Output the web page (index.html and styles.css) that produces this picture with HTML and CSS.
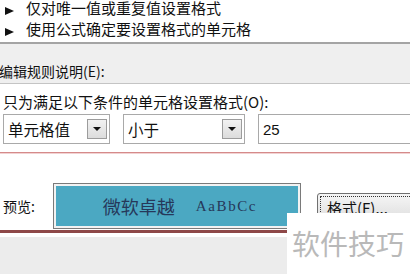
FILE: index.html
```html
<!DOCTYPE html>
<html lang="zh-CN">
<head>
    <meta charset="UTF-8">
    <title>编辑格式规则</title>
    <link rel="stylesheet" href="styles.css">
</head>
<body>
    <div class="dialog">
        <ul class="rule-types">
            <li><span class="arrow"></span>仅对唯一值或重复值设置格式</li>
            <li><span class="arrow"></span>使用公式确定要设置格式的单元格</li>
        </ul>

        <div class="section-title">编辑规则说明(E):</div>

        <div class="rule-edit">
            <div class="cond-label">只为满足以下条件的单元格设置格式(O):</div>
            <div class="cond-row">
                <div class="combo combo-type">
                    <span>单元格值</span>
                    <span class="drop"></span>
                </div>
                <div class="combo combo-op">
                    <span>小于</span>
                    <span class="drop"></span>
                </div>
                <input class="value" type="text" value="25">
            </div>
        </div>

        <div class="preview-row">
            <span class="preview-label">预览:</span>
            <div class="preview-box">
                <span class="sample-cn">微软卓越</span>
                <span class="sample-en">AaBbCc</span>
            </div>
            <button class="format-btn"><span>格式(F)...</span></button>
        </div>

        <div class="footer"></div>
    </div>

    <div class="watermark">软件技巧</div>
</body>
</html>
```

FILE: styles.css
```css
body {
    margin: 0;
    width: 410px;
    height: 274px;
    overflow: hidden;
    position: relative;
    background: #fff;
    font-family: "Noto Sans CJK SC", "Liberation Sans", sans-serif;
    font-size: 15px;
    color: #111;
}
.rule-types {
    list-style: none;
    margin: -3px 0 3px;
    padding: 0;
}
.rule-types li {
    height: 21px;
    line-height: 21px;
    display: flex;
    align-items: center;
    padding-left: 5px;
    white-space: nowrap;
}
.arrow {
    width: 0;
    height: 0;
    border-left: 9px solid #111;
    border-top: 4px solid transparent;
    border-bottom: 4px solid transparent;
    margin: 6px 12px 0 0;
}
.section-title {
    border-top: 2px solid #a4a4a4;
    border-bottom: 1px solid #c4c4c4;
    background: #efefef;
    height: 19px;
    line-height: 19px;
    padding: 18px 0 2px;
    font-size: 14px;
    text-indent: -1px;
}
.rule-edit {
    padding: 8px 0 8px;
    border-bottom: 1px solid #d58a8a;
    box-shadow: 0 1px 0 #f2d2d2;
}
.cond-label {
    line-height: 20px;
    padding-left: 3px;
}
.cond-row {
    display: flex;
    gap: 13px;
    margin-top: 2px;
    padding-left: 3px;
}
.combo {
    box-sizing: border-box;
    flex-shrink: 0;
    height: 30px;
    border: 1px solid #a9a9a9;
    display: flex;
    align-items: center;
    justify-content: space-between;
    padding: 0 2px 0 4px;
    background: #fff;
    font-size: 15.5px;
}
.combo-type {
    width: 107px;
}
.combo-op {
    width: 122px;
}
.drop {
    box-sizing: border-box;
    width: 20px;
    height: 20px;
    border: 1px solid #9c9c9c;
    background: linear-gradient(#f2f2f2, #dcdcdc);
    display: flex;
    align-items: center;
    justify-content: center;
}
.drop::after {
    content: "";
    border-top: 4px solid #111;
    border-left: 4px solid transparent;
    border-right: 4px solid transparent;
}
.value {
    box-sizing: border-box;
    flex-shrink: 0;
    width: 170px;
    height: 30px;
    border: 1px solid #a9a9a9;
    padding: 0 4px;
    font-family: "Liberation Sans", sans-serif;
    font-size: 15px;
    color: #111;
    outline: none;
}
.preview-row {
    display: flex;
    align-items: center;
    padding: 30px 0 1px 3px;
    border-bottom: 3px solid #8e4848;
}
.preview-label {
    flex-shrink: 0;
    width: 50px;
    font-size: 14px;
}
.preview-box {
    box-sizing: border-box;
    flex-shrink: 0;
    width: 248px;
    height: 46px;
    border: 1px solid #7a7a7a;
    box-shadow: inset 0 0 0 2px #f2f2f2;
    background: #4ba8c2;
    display: flex;
    align-items: center;
    justify-content: center;
    gap: 21px;
    padding-left: 6px;
    color: #26385a;
}
.sample-cn {
    font-size: 18px;
}
.sample-en {
    font-family: "Liberation Serif", serif;
    font-size: 15px;
    letter-spacing: 1.6px;
}
.format-btn {
    flex-shrink: 0;
    margin: 2px 0 0 16px;
    width: 100px;
    height: 28px;
    padding: 2px;
    border: 1px solid #707070;
    border-radius: 3px;
    background: linear-gradient(#f6f6f6, #dedede);
    font-family: inherit;
    font-size: 15px;
    color: #111;
    text-align: left;
}
.format-btn span {
    display: block;
    height: 22px;
    line-height: 22px;
    border: 1px dotted #333;
    padding-left: 6px;
}
.footer {
    margin-top: 4px;
    height: 40px;
    background: #ececec;
}
.watermark {
    position: absolute;
    right: 0;
    bottom: 0;
    width: 118px;
    height: 61px;
    padding-left: 5px;
    background: #fff;
    color: #b9b9b9;
    font-size: 28px;
    line-height: 60px;
    white-space: nowrap;
}
```
